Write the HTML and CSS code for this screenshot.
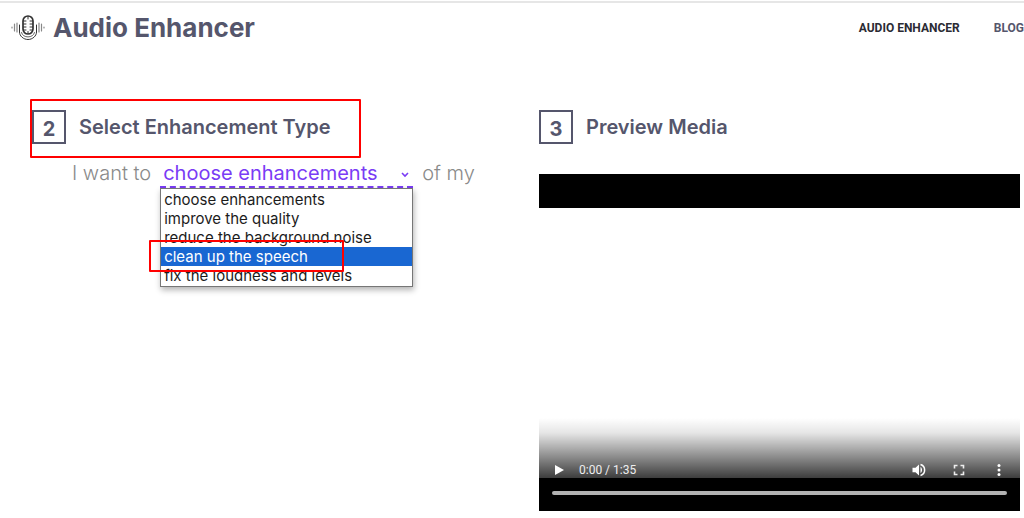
FILE: index.html
```html
<!DOCTYPE html>
<html lang="en">
<head>
<meta charset="utf-8">
<meta name="viewport" content="width=device-width, initial-scale=1">
<title>Audio Enhancer</title>
<link rel="stylesheet" href="styles.css">
</head>
<body>
<header class="header">
  <a class="brand" href="#">
    <svg class="brand-icon" viewBox="0 0 34 26" fill="none" stroke="#333" stroke-linecap="round" aria-hidden="true">
      <rect x="12" y="1" width="10" height="18" rx="5" stroke-width="1.7"/>
      <path d="M12.5 6h2.500M12.5 9h2.500M12.5 12h2.500M12.5 15h2.500M19 6h2.500M19 9h2.500M19 12h2.500M19 15h2.500M17 1.500v2.500M17 16.500v2" stroke-width="1"/>
      <path d="M8.500 10v7c0 4 4 7.500 8.500 7.500s8.500-3.500 8.500-7.500v-7" stroke-width="1"/>
      <path d="M10.500 17.500c1 6 12 6 13 0" stroke="#666" stroke-width="1"/>
      <path d="M6 8v9M28 8v9M3.500 9v7M30.500 9v7M1 12v1M33 12v1" stroke="#888" stroke-width="1.200"/>
    </svg>
    <span class="brand-name">Audio Enhancer</span>
  </a>
  <nav class="nav" aria-label="Main">
    <a class="nav-link nav-link-active" href="#" aria-current="page">AUDIO ENHANCER</a>
    <a class="nav-link" href="#">BLOG</a>
  </nav>
</header>
<main class="steps">
  <section class="step">
    <div class="step-head">
      <span class="step-number">2</span>
      <h2 class="step-title">Select Enhancement Type</h2>
      <span class="mark mark-title"></span>
    </div>
    <div class="sentence">
      <label for="enhancement">I want to</label>
      <div class="picker">
        <select class="picker-select" id="enhancement">
          <option>choose enhancements</option>
          <option>improve the quality</option>
          <option>reduce the background noise</option>
          <option>clean up the speech</option>
          <option>fix the loudness and levels</option>
        </select>
        <svg class="picker-arrow" viewBox="0 0 8 6" fill="none" stroke="#7a3cf5" stroke-width="1.600" aria-hidden="true"><path d="M1 1l3 3 3-3"/></svg>
        <ul class="menu" role="listbox" aria-label="Enhancements">
          <li class="menu-item" role="option">choose enhancements</li>
          <li class="menu-item" role="option">improve the quality</li>
          <li class="menu-item" role="option">reduce the background noise</li>
          <li class="menu-item menu-item-active" role="option" aria-selected="true">clean up the speech</li>
          <li class="menu-item" role="option">fix the loudness and levels</li>
        </ul>
        <span class="mark mark-option"></span>
      </div>
      <span>of my</span>
    </div>
  </section>
  <section class="step">
    <div class="step-head">
      <span class="step-number">3</span>
      <h2 class="step-title">Preview Media</h2>
    </div>
    <div class="player">
      <div class="player-band"></div>
      <div class="player-screen">
        <div class="controls">
          <button class="control" type="button" aria-label="Play"><svg viewBox="0 0 16 16" fill="#fff"><path d="M4 3v10l9-5z"/></svg></button>
          <span class="time">0:00 / 1:35</span>
          <button class="control" type="button" aria-label="Mute"><svg viewBox="0 0 16 16" fill="none" stroke="#fff" stroke-width="1.500"><path d="M1.500 5.800h3l3.500-3.300v11l-3.500-3.300h-3z" fill="#fff" stroke="none"/><path d="M9.500 5c2 1.200 2 4.800 0 6z" fill="#fff" stroke="none"/><path d="M9.500 2.500c5.500 1.500 5.500 9.500 0 11"/></svg></button>
          <button class="control" type="button" aria-label="Full screen"><svg viewBox="0 0 16 16" fill="none" stroke="#eee" stroke-width="1.600"><path d="M3.500 6.500v-3h3M9.500 3.500h3v3M12.500 9.500v3h-3M6.500 12.500h-3v-3"/></svg></button>
          <button class="control" type="button" aria-label="More options"><svg viewBox="0 0 16 16" fill="#fff"><circle cx="8" cy="3.500" r="1.500"/><circle cx="8" cy="8" r="1.500"/><circle cx="8" cy="12.500" r="1.500"/></svg></button>
        </div>
      </div>
      <div class="player-band player-foot">
        <input class="seek" type="range" min="0" max="95" value="0" aria-label="Seek">
      </div>
    </div>
  </section>
</main>
</body>
</html>
```
FILE: styles.css
```css
* { box-sizing: border-box; }

body {
  margin: 0;
  padding-top: 1px;
  background: #fff;
  color: #55566c;
  font-family: Inter, Roboto, "Liberation Sans", sans-serif;
}

.header {
  display: flex;
  align-items: center;
  justify-content: space-between;
  height: 52px;
  padding: 0 0 0 11px;
  border-top: 2px solid #e6e6e6;
}

.brand {
  display: flex;
  align-items: center;
  gap: 8px;
  color: inherit;
  text-decoration: none;
}

.brand-icon { width: 34px; height: 26px; }

.brand-name {
  font-size: 26px;
  font-weight: 700;
  line-height: 32px;
}

.nav { display: flex; gap: 34px; }

.nav-link {
  color: #55566c;
  font-family: Roboto, "Liberation Sans", sans-serif;
  font-size: 12px;
  font-weight: 700;
  line-height: 16px;
  text-decoration: none;
}

.nav-link-active { color: #2b2b33; }

.steps {
  display: grid;
  grid-template-columns: 1fr 1fr;
  gap: 26px;
  padding: 57px 4px 0 32px;
}

.step-head {
  position: relative;
  display: flex;
  align-items: center;
  gap: 13px;
  height: 34px;
}

.step-number {
  display: grid;
  place-items: center;
  width: 34px;
  height: 34px;
  padding-top: 3px;
  border: 2px solid #55566c;
  font-size: 20px;
  font-weight: 700;
  line-height: 24px;
}

.step-title {
  margin: 0;
  font-size: 20px;
  font-weight: 600;
  line-height: 24px;
}

.sentence {
  display: flex;
  align-items: center;
  gap: 9px;
  margin: 14px 0 0 40px;
  color: #8a8a8a;
  font-size: 20px;
  font-weight: 300;
  line-height: 30px;
  white-space: nowrap;
}

.picker { position: relative; width: 253px; }

.picker-select {
  display: block;
  width: 100%;
  height: 30px;
  padding: 0 24px 0 3px;
  border: 0;
  border-bottom: 2px dashed #7a3cf5;
  border-radius: 0;
  background: none;
  color: #7a3cf5;
  font: inherit;
  font-weight: 400;
  appearance: none;
}

.picker-arrow {
  position: absolute;
  top: 14px;
  right: 4px;
  width: 8px;
  height: 6px;
}

.menu {
  position: absolute;
  top: 100%;
  left: 0;
  width: 100%;
  margin: 0;
  padding: 1px 0;
  border: 1px solid #767676;
  background: #fff;
  box-shadow: 1px 3px 6px rgba(0, 0, 0, .3);
  color: #1c1c1c;
  font-size: 15px;
  font-weight: 400;
  line-height: 19px;
  list-style: none;
}

.menu-item { padding: 0 3px; }

.menu-item-active { background: #1967d2; color: #fff; }

.mark {
  position: absolute;
  border: 2px solid #f00;
  border-radius: 1px;
  pointer-events: none;
}

.mark-title { top: -11px; left: -2px; width: 331px; height: 59px; }
.mark-option { top: 82px; left: -11px; width: 195px; height: 32px; }

.player { margin-top: 30px; }

.player-band { height: 34px; background: #000; }

.player-screen {
  display: flex;
  align-items: flex-end;
  height: 270px;
  background: #fff;
}

.controls {
  display: flex;
  flex: 1;
  align-items: flex-end;
  gap: 24px;
  height: 60px;
  padding: 0 13px 0 12px;
  background: linear-gradient(rgba(0, 0, 0, 0), rgba(0, 0, 0, .1) 25%, rgba(0, 0, 0, .76));
}

.control {
  width: 16px;
  height: 16px;
  padding: 0;
  border: 0;
  background: none;
}

.control svg { display: block; width: 16px; height: 16px; }

.time {
  flex: 1;
  margin-left: -12px;
  color: #eee;
  font-family: Roboto, "Liberation Sans", sans-serif;
  font-size: 12px;
  line-height: 16px;
}

.player-foot {
  display: flex;
  align-items: flex-start;
  height: 33px;
  padding: 13px;
}

.seek {
  width: 100%;
  height: 4px;
  margin: 0;
  border-radius: 2px;
  background: #b2b2b2;
  appearance: none;
}

.seek::-webkit-slider-thumb { width: 0; height: 0; appearance: none; }
```
